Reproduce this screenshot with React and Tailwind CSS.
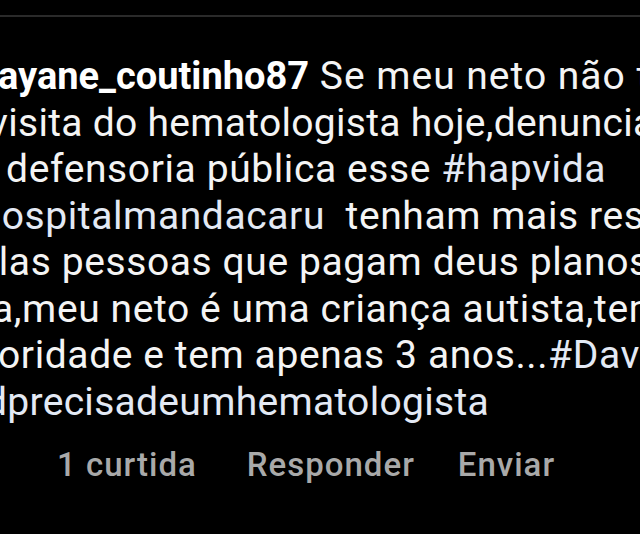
import React from "react";

const lines = [
  { ml: "ml-[-2px]", parts: [{ b: true, t: "ayane_coutinho87" }, { w: true, t: " Se meu neto não tem" }] },
  { ml: "ml-[-11px] tracking-[0.3px]", parts: [{ t: "visita do hematologista hoje,denunciarei" }] },
  { ml: "ml-[-26px]", parts: [{ t: "a defensoria pública esse " }, { h: true, t: "#hapvida" }] },
  { ml: "ml-[-45px]", parts: [{ h: true, t: "#hospitalmandacaru" }, { t: "  tenham mais respeito" }] },
  { ml: "ml-[-45px]", parts: [{ t: "pelas pessoas que pagam deus planos" }] },
  { ml: "ml-[-8px]", parts: [{ t: "a,meu neto é uma criança autista,tem" }] },
  { ml: "ml-[-2px]", parts: [{ t: "oridade e tem apenas 3 anos..." }, { h: true, t: "#Davi" }] },
  { ml: "ml-[-15px] tracking-[0.3px]", parts: [{ h: true, t: "dprecisadeumhematologista" }] },
];

export default function App() {
  return (
    <div className="w-[640px] h-[534px] bg-black overflow-hidden font-['Roboto',sans-serif]">
      <div className="pt-[15px]">
        <div className="h-[2px] bg-[#2a2a2a]" />
      </div>

      <div className="mt-[36px] text-[39px] leading-[46.5px] tracking-[0.6px] text-[#f4f4f4]">
        {lines.map((line, i) => (
          <div key={i} className={`whitespace-pre ${line.ml}`}>
            {line.parts.map((p, j) => (
              <span
                key={j}
                className={
                  p.b
                    ? "font-bold text-white text-[38px] tracking-normal"
                    : p.w
                    ? "tracking-[1px]"
                    : p.h
                    ? "text-[#e3e9f4]"
                    : ""
                }
              >
                {p.t}
              </span>
            ))}
          </div>
        ))}
      </div>

      <div className="mt-[20px] flex items-center text-[33px] leading-[40px] font-medium tracking-[1px] text-[#a9a9a9] whitespace-nowrap">
        <span className="ml-[57px]">1 curtida</span>
        <span className="ml-[50px]">Responder</span>
        <span className="ml-[43px]">Enviar</span>
      </div>
    </div>
  );
}
